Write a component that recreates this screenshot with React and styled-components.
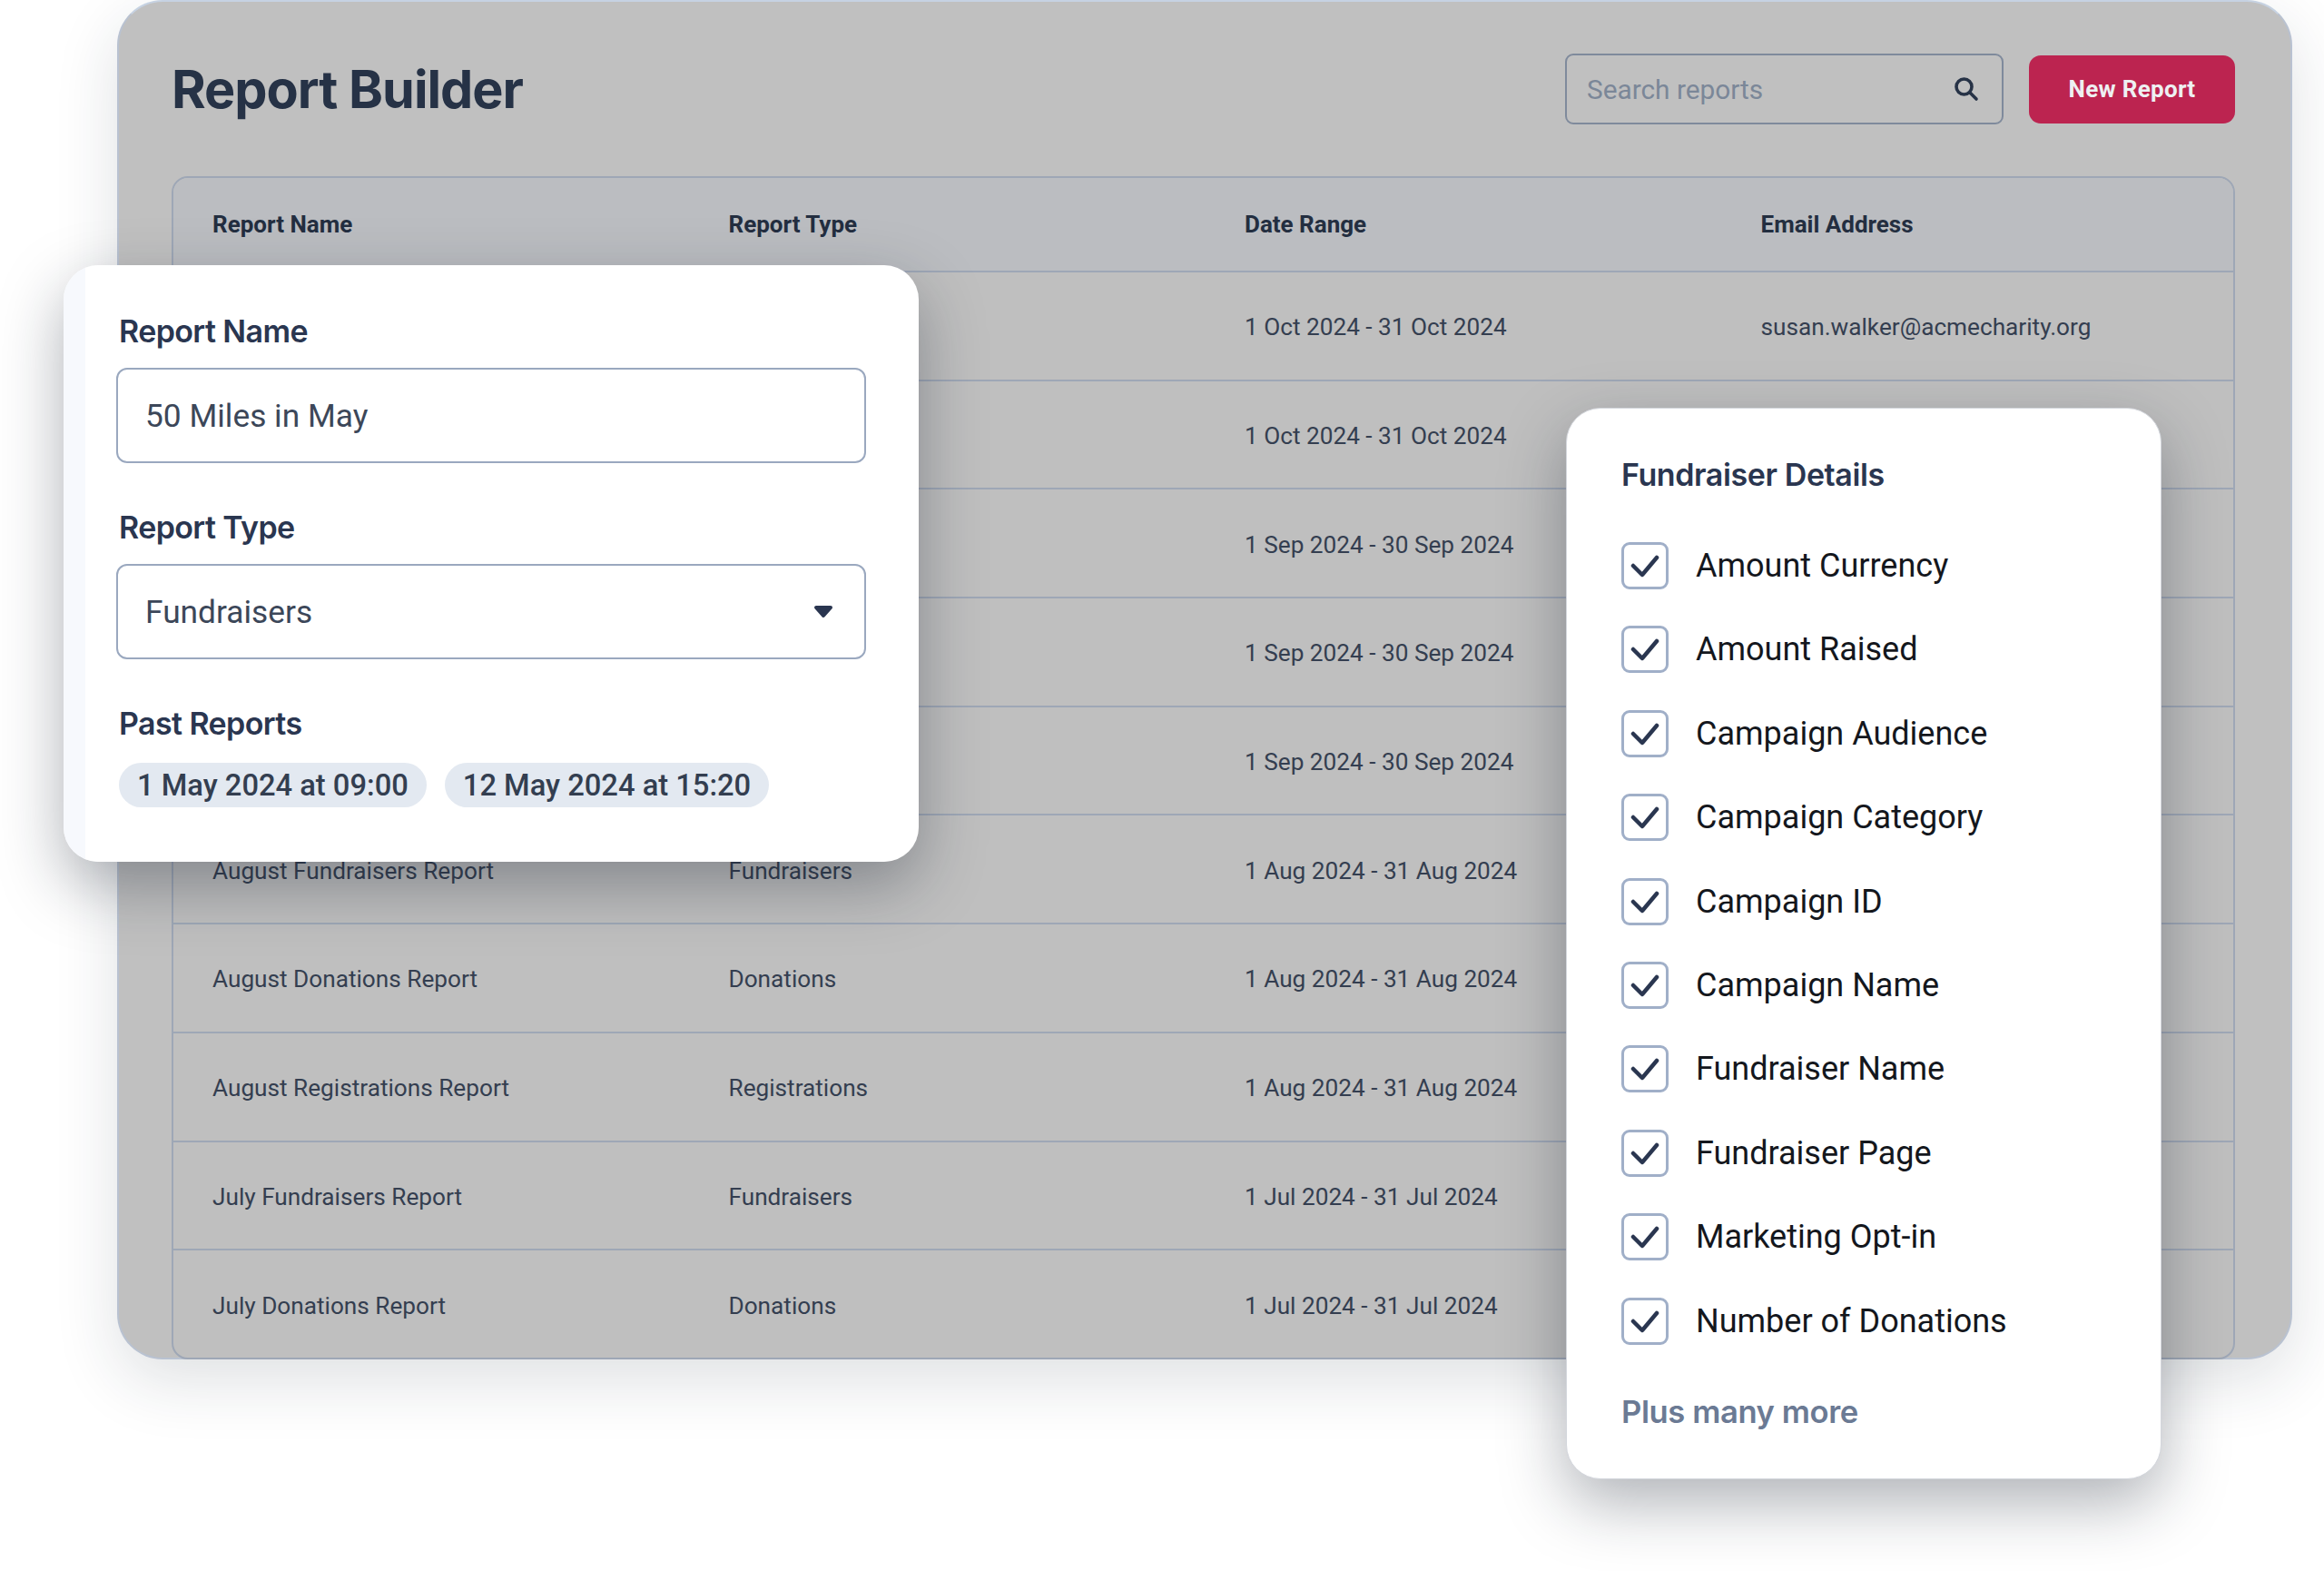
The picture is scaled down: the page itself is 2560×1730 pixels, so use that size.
import styled, { createGlobalStyle } from "styled-components";

const GlobalStyle = createGlobalStyle`
    html, body {
        margin: 0;
        padding: 0;
        background: #fff;
    }
    body {
        font-family: Roboto, "Liberation Sans", sans-serif;
        color: #2b3648;
    }
`;

const Stage = styled.div`
    position: relative;
    width: 2560px;
    height: 1730px;
    padding-left: 129px;
    box-sizing: border-box;
    overflow: hidden;
`;

const Panel = styled.div`
    width: 2396px;
    height: 1497px;
    box-sizing: border-box;
    padding: 0 61px 0 58px;
    background: #c0c0c0;
    border: 2px solid #b9c2d1;
    border-top-color: #c6d2e2;
    border-radius: 50px;
    box-shadow: 0 24px 70px rgba(30, 40, 60, 0.14);
`;

const Toolbar = styled.div`
    display: flex;
    align-items: center;
    height: 192px;
`;

const Title = styled.h1`
    flex: 1;
    margin: 0;
    font-family: Inter, Roboto, sans-serif;
    font-size: 57.5px;
    font-weight: 700;
    letter-spacing: -1px;
    color: #263246;
`;

const SearchBox = styled.div`
    display: flex;
    align-items: center;
    justify-content: space-between;
    width: 483px;
    height: 78px;
    box-sizing: border-box;
    padding: 0 24px 0 22px;
    border: 2px solid #7f8a9c;
    border-radius: 9px;
    font-size: 29.8px;
    color: #7b8798;
`;

const NewButton = styled.div`
    display: flex;
    align-items: center;
    justify-content: center;
    width: 227px;
    height: 75px;
    margin-left: 28px;
    background: #bc2450;
    border-radius: 13px;
    font-size: 26px;
    font-weight: 700;
    letter-spacing: 0.3px;
    color: #eef0f2;
`;

const Table = styled.div`
    height: 1303px;
    box-sizing: border-box;
    border: 2px solid #9ea7b6;
    border-radius: 18px;
    background: #bfbfbf;
`;

const Row = styled.div`
    display: grid;
    grid-template-columns: repeat(4, 568.5px);
    align-items: center;
    height: ${p => (p.$head ? "102px" : "119.7px")};
    box-sizing: border-box;
    padding: ${p => (p.$head ? "0" : "3px")} 0 0 43px;
    font-size: ${p => (p.$head ? "26px" : "26.2px")};
    font-weight: ${p => (p.$head ? 700 : 400)};
    color: ${p => (p.$head ? "#232e40" : "#343e50")};
    background: ${p => (p.$head ? "#bbbdc1" : "transparent")};
    border-top: ${p => (p.$head ? "0" : "2px solid #9ea7b6")};
    border-radius: ${p => (p.$head ? "16px 16px 0 0" : "0")};
`;

const Card = styled.div`
    position: absolute;
    background: #fff;
    border-radius: 38px;
    box-sizing: border-box;
    box-shadow: 0 26px 70px rgba(20, 28, 44, 0.34);
`;

const FormCard = styled(Card)`
    left: 70px;
    top: 292px;
    width: 942px;
    height: 657px;
    padding: 53px 58px 0;
    background: linear-gradient(90deg, #f7f9fd 24px, #fff 24px);
`;

const Label = styled.div`
    margin: ${p => (p.$first ? "0" : "51px")} 0 20px 3px;
    font-family: Inter, Roboto, sans-serif;
    font-size: 34px;
    line-height: 40px;
    font-weight: 600;
    letter-spacing: -0.6px;
    color: #2a3650;
`;

const Field = styled.div`
    display: flex;
    align-items: center;
    justify-content: space-between;
    height: 105px;
    box-sizing: border-box;
    padding: 0 30px;
    border: 2px solid #9aa8bf;
    border-radius: 12px;
    font-size: 35.3px;
    color: #3c4759;
`;

const Chips = styled.div`
    display: flex;
    gap: 20px;
    margin: 23px 0 0 3px;
`;

const Chip = styled.div`
    display: flex;
    align-items: center;
    height: 49px;
    padding: 0 20px;
    border-radius: 25px;
    background: #e3e9f1;
    font-size: 32.7px;
    font-weight: 500;
    color: #333e50;
`;

const ColumnsCard = styled(Card)`
    left: 1725px;
    top: 449px;
    width: 656px;
    height: 1180px;
    padding: 53px 60px 0;
    border: 1px solid #d3d6dc;
`;

const CardTitle = styled.div`
    margin-bottom: 54px;
    font-family: Inter, Roboto, sans-serif;
    font-size: 34px;
    line-height: 40px;
    font-weight: 600;
    letter-spacing: -0.4px;
    color: #2a3650;
`;

const CheckList = styled.div`
    display: flex;
    flex-direction: column;
    gap: 40.4px;
`;

const CheckRow = styled.div`
    display: flex;
    align-items: center;
    gap: 30px;
    height: 52px;
    font-size: 36px;
    color: #14171d;
`;

const Box = styled.div`
    display: flex;
    align-items: center;
    justify-content: center;
    width: 52px;
    height: 52px;
    box-sizing: border-box;
    border: 3px solid #a0afc8;
    border-radius: 9px;
`;

const More = styled.div`
    margin-top: 53px;
    font-family: Inter, Roboto, sans-serif;
    font-size: 34.6px;
    line-height: 40px;
    font-weight: 600;
    letter-spacing: -0.4px;
    color: #6b7a94;
`;

const SearchIcon = () => (
    <svg width="30" height="30" viewBox="0 0 30 30" fill="none" stroke="#263246" strokeWidth="3.6" strokeLinecap="round">
        <circle cx="12.5" cy="12.5" r="8.5" />
        <path d="M19 19 L26 26" />
    </svg>
);

const Caret = () => (
    <svg width="24" height="15" viewBox="0 0 24 15" style={{marginRight: 3}}>
        <path d="M4 3 H20 L12 12 Z" fill="#2a3650" stroke="#2a3650" strokeWidth="4" strokeLinejoin="round" />
    </svg>
);

const Tick = () => (
    <svg width="32" height="26" viewBox="0 0 32 26" fill="none" stroke="#2a3650" strokeWidth="4.5" strokeLinecap="round" strokeLinejoin="round">
        <path d="M3 13 L13 23 L29 4" />
    </svg>
);

// rows 1 to 5 have their first two columns behind the form card
const reports = [
    ["", "", "1 Oct 2024 - 31 Oct 2024", "susan.walker@acmecharity.org"],
    ["", "", "1 Oct 2024 - 31 Oct 2024"],
    ["", "", "1 Sep 2024 - 30 Sep 2024"],
    ["", "", "1 Sep 2024 - 30 Sep 2024"],
    ["", "", "1 Sep 2024 - 30 Sep 2024"],
    ["August Fundraisers Report", "Fundraisers", "1 Aug 2024 - 31 Aug 2024"],
    ["August Donations Report", "Donations", "1 Aug 2024 - 31 Aug 2024"],
    ["August Registrations Report", "Registrations", "1 Aug 2024 - 31 Aug 2024"],
    ["July Fundraisers Report", "Fundraisers", "1 Jul 2024 - 31 Jul 2024"],
    ["July Donations Report", "Donations", "1 Jul 2024 - 31 Jul 2024"],
];

const fields = [
    "Amount Currency",
    "Amount Raised",
    "Campaign Audience",
    "Campaign Category",
    "Campaign ID",
    "Campaign Name",
    "Fundraiser Name",
    "Fundraiser Page",
    "Marketing Opt-in",
    "Number of Donations",
];

export default function App() {
    return <Stage>
        <GlobalStyle/>
        <Panel>
            <Toolbar>
                <Title>Report Builder</Title>
                <SearchBox>Search reports<SearchIcon/></SearchBox>
                <NewButton>New Report</NewButton>
            </Toolbar>
            <Table>
                <Row $head>
                    <div>Report Name</div>
                    <div>Report Type</div>
                    <div>Date Range</div>
                    <div>Email Address</div>
                </Row>
                {reports.map((r, i) => <Row key={i}>
                    <div>{r[0]}</div>
                    <div>{r[1]}</div>
                    <div>{r[2]}</div>
                    <div>{r[3]}</div>
                </Row>)}
            </Table>
        </Panel>
        <FormCard>
            <Label $first>Report Name</Label>
            <Field>50 Miles in May</Field>
            <Label>Report Type</Label>
            <Field>Fundraisers<Caret/></Field>
            <Label>Past Reports</Label>
            <Chips>
                <Chip>1 May 2024 at 09:00</Chip>
                <Chip>12 May 2024 at 15:20</Chip>
            </Chips>
        </FormCard>
        <ColumnsCard>
            <CardTitle>Fundraiser Details</CardTitle>
            <CheckList>
                {fields.map(f => <CheckRow key={f}>
                    <Box><Tick/></Box>
                    {f}
                </CheckRow>)}
            </CheckList>
            <More>Plus many more</More>
        </ColumnsCard>
    </Stage>
}
